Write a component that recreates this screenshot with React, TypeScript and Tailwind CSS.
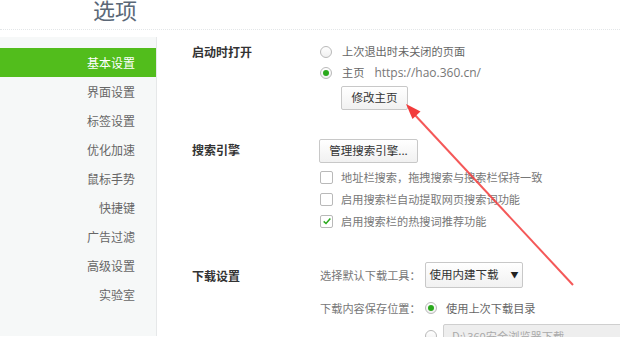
import type { ReactNode } from "react";

const NAV = ["基本设置", "界面设置", "标签设置", "优化加速", "鼠标手势", "快捷键", "广告过滤", "高级设置", "实验室"];

const FONT = "font-['Microsoft_YaHei','Noto_Sans_CJK_SC',sans-serif]";

function Radio({ checked = false }: { checked?: boolean }) {
  return (
    <span className="flex size-[12px] shrink-0 items-center justify-center rounded-full border border-[#b9b9b9] bg-gradient-to-b from-white to-[#f0f0f0]">
      {checked ? <span className="size-[6px] rounded-full bg-[#2aa91c]" /> : null}
    </span>
  );
}

function Checkbox({ checked = false }: { checked?: boolean }) {
  return (
    <span className="flex size-[13px] shrink-0 items-center justify-center rounded-[2px] border border-[#b9b9b9] bg-white">
      {checked ? (
        <svg viewBox="0 0 12 12" className="size-[10px]">
          <path d="M2 6.5 L4.8 9 L10 3" fill="none" stroke="#2aa91c" strokeWidth="1.8" />
        </svg>
      ) : null}
    </span>
  );
}

function Button({ children, className = "" }: { children: ReactNode; className?: string }) {
  return (
    <div
      className={`flex items-center justify-center whitespace-nowrap rounded-[2px] border border-[#c8c8c8] bg-gradient-to-b from-white to-[#f1f1f1] text-[11.5px] text-[#333] ${className}`}
    >
      {children}
    </div>
  );
}

function Section({ label, children, className = "" }: { label: string; children: ReactNode; className?: string }) {
  return (
    <div className={`flex ${className}`}>
      <div className="w-[128px] shrink-0 pt-[2px] text-[12px] font-bold leading-[18px] text-[#333]">{label}</div>
      <div className="flex flex-col">{children}</div>
    </div>
  );
}

export default function App() {
  return (
    <div className={`relative h-[337px] w-[620px] overflow-hidden bg-white ${FONT}`}>
      <header className="flex h-[30px] items-start border-b border-dotted border-[#e3e6e8]">
        <div className="-mt-[4px] pl-[93px] text-[22px] leading-[26px] text-[#5b6877]">选项</div>
      </header>

      <div className="flex h-[306px]">
        <nav className="mt-[7px] w-[157px] shrink-0 border-r border-[#e6e8e9] bg-[#f6f8f8] pt-[11px]">
          {NAV.map((item, i) => (
            <div
              key={item}
              className={`flex h-[29px] items-center justify-end pr-[21px] text-[12px] ${
                i === 0 ? "bg-[#52bd1c] text-white" : "text-[#666]"
              }`}
            >
              {item}
            </div>
          ))}
        </nav>

        <main className="flex-1 whitespace-nowrap pl-[35px] pt-[11px] text-[11.2px] text-[#666]">
          <Section label="启动时打开">
            <div className="flex h-[21px] items-center gap-[10px]">
              <Radio />
              <span>上次退出时未关闭的页面</span>
            </div>
            <div className="flex h-[21px] items-center gap-[10px]">
              <Radio checked />
              <span>主页</span>
              <span className="font-['Open_Sans',sans-serif] text-[12px] text-[#777]">https://hao.360.cn/</span>
            </div>
            <Button className="ml-[21px] mt-[3px] h-[24px] w-[67px]">修改主页</Button>
          </Section>

          <Section label="搜索引擎" className="mt-[29px]">
            <div className="-ml-[1px] flex flex-col">
              <Button className="h-[24px] w-[99px]">管理搜索引擎...</Button>
            </div>
            <div className="mt-[3px] flex h-[22px] items-center gap-[8px]">
              <Checkbox />
              <span className="text-[#777]">地址栏搜索，拖拽搜索与搜索栏保持一致</span>
            </div>
            <div className="flex h-[22px] items-center gap-[8px]">
              <Checkbox />
              <span className="text-[#777]">启用搜索栏自动提取网页搜索词功能</span>
            </div>
            <div className="flex h-[22px] items-center gap-[8px]">
              <Checkbox checked />
              <span className="text-[#777]">启用搜索栏的热搜词推荐功能</span>
            </div>
          </Section>

          <Section label="下载设置" className="mt-[30px] [&>div:first-child]:pt-[5px]">
            <div className="flex h-[26px] items-center">
              <span className="w-[105px] text-[#777]">选择默认下载工具：</span>
              <Button className="h-[26px] w-[98px] gap-[12px]">
                <span>使用内建下载</span>
                <span className="text-[8px] text-[#222]">▼</span>
              </Button>
            </div>
            <div className="mt-[9px] flex h-[22px] items-center">
              <span className="w-[105px] text-[#777]">下载内容保存位置：</span>
              <Radio checked />
              <span className="ml-[9px]">使用上次下载目录</span>
            </div>
            <div className="mt-[5px] flex h-[22px] items-start">
              <span className="ml-[105px] mt-[6px]">
                <Radio />
              </span>
              <div className="ml-[6px] h-[22px] w-[180px] rounded-[2px] border border-[#cfcfcf] bg-[#eeeeee] pl-[8px] pt-[3px] text-[#aaa]">
                D:\360安全浏览器下载
              </div>
            </div>
          </Section>
        </main>
      </div>

      <svg className="pointer-events-none absolute inset-0" width="620" height="337" viewBox="0 0 620 337">
        <line x1="573" y1="285" x2="414" y2="114" stroke="#f23b3b" strokeWidth="2" strokeOpacity="0.85" />
        <polygon points="406,104 420.5,111.5 412.5,119" fill="#f23b3b" />
      </svg>
    </div>
  );
}
